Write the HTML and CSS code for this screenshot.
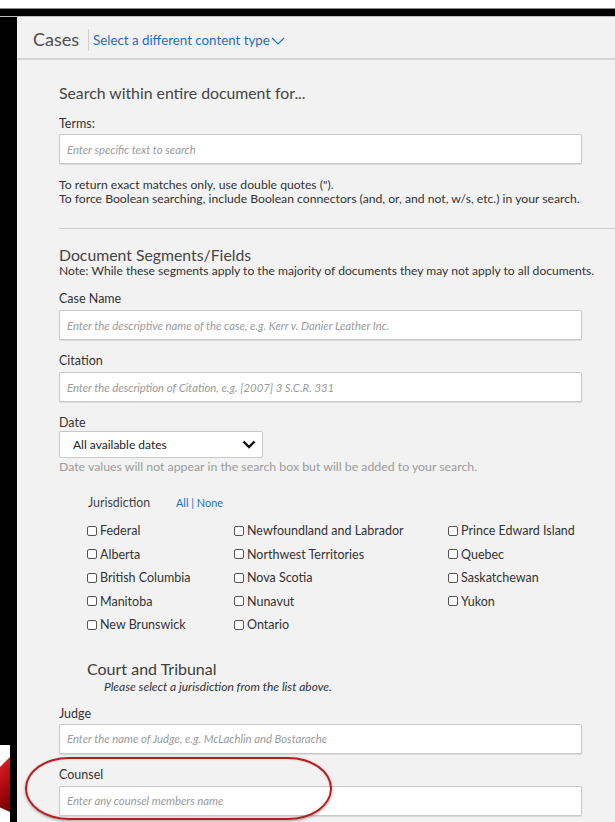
FILE: index.html
```html
<!DOCTYPE html>
<html lang="en">
<head>
<meta charset="utf-8">
<title>Cases – Search</title>
<link rel="stylesheet" href="styles.css">
</head>
<body>
<div class="screen">
  <div class="topbar"></div>
  <div class="body">
    <div class="rail">
      <div class="rail-edge">
        <div class="rail-black"></div>
        <div class="rail-gap"></div>
        <div class="rail-tab"></div>
        <div class="rail-rest"></div>
      </div>
      <div class="rail-line"></div>
    </div>

    <main class="panel">
      <header class="panel-head">
        <h1 class="head-title">Cases</h1>
        <span class="head-sep"></span>
        <a class="head-link" href="#">Select a different content type
          <svg class="head-chevron" width="14" height="8" viewBox="0 0 14 8"><path d="M1 1l6 6 6-6" fill="none" stroke="currentColor" stroke-width="1.1"/></svg>
        </a>
      </header>

      <div class="form">
        <h2 class="section-title">Search within entire document for...</h2>
        <div class="label label-terms">Terms:</div>
        <input class="text-input" type="text" placeholder="Enter specific text to search">
        <p class="hint">To return exact matches only, use double quotes (").</p>
        <p class="hint hint-next">To force Boolean searching, include Boolean connectors (and, or, and not, w/s, etc.) in your search.</p>

        <div class="divider"></div>

        <h2 class="section-title section-title-tight">Document Segments/Fields</h2>
        <p class="note">Note: While these segments apply to the majority of documents they may not apply to all documents.</p>

        <div class="label field-label">Case Name</div>
        <input class="text-input input-gap" type="text" placeholder="Enter the descriptive name of the case, e.g. Kerr v. Danier Leather Inc.">

        <div class="label field-label">Citation</div>
        <input class="text-input input-gap" type="text" placeholder="Enter the description of Citation, e.g. [2007] 3 S.C.R. 331">

        <div class="label field-label">Date</div>
        <div class="select">
          <span>All available dates</span>
          <svg width="14" height="9" viewBox="0 0 14 9"><path d="M1.5 1.5l5.5 5.5 5.5-5.5" fill="none" stroke="#111" stroke-width="2.4"/></svg>
        </div>
        <p class="date-hint">Date values will not appear in the search box but will be added to your search.</p>

        <div class="jur-head">
          <span class="jur-label">Jurisdiction</span>
          <span class="jur-links"><a href="#">All</a> | <a href="#">None</a></span>
        </div>

        <div class="jur-grid">
          <label class="check"><input type="checkbox">Federal</label>
          <label class="check"><input type="checkbox">Newfoundland and Labrador</label>
          <label class="check"><input type="checkbox">Prince Edward Island</label>
          <label class="check"><input type="checkbox">Alberta</label>
          <label class="check"><input type="checkbox">Northwest Territories</label>
          <label class="check"><input type="checkbox">Quebec</label>
          <label class="check"><input type="checkbox">British Columbia</label>
          <label class="check"><input type="checkbox">Nova Scotia</label>
          <label class="check"><input type="checkbox">Saskatchewan</label>
          <label class="check"><input type="checkbox">Manitoba</label>
          <label class="check"><input type="checkbox">Nunavut</label>
          <label class="check"><input type="checkbox">Yukon</label>
          <label class="check"><input type="checkbox">New Brunswick</label>
          <label class="check"><input type="checkbox">Ontario</label>
        </div>

        <h2 class="section-title court-title">Court and Tribunal</h2>
        <p class="court-sub">Please select a jurisdiction from the list above.</p>

        <div class="label judge-label">Judge</div>
        <input class="text-input judge-input" type="text" placeholder="Enter the name of Judge, e.g. McLachlin and Bostarache">

        <div class="label field-label">Counsel</div>
        <input class="text-input input-gap" type="text" placeholder="Enter any counsel members name">
      </div>

      <div class="callout"></div>
    </main>
  </div>
</div>
</body>
</html>
```

FILE: styles.css
```css
* { box-sizing: border-box; }

body {
  margin: 0;
  background: #fff;
  font-family: Lato, "Open Sans", "Liberation Sans", sans-serif;
  color: #333;
}

.screen {
  width: 615px;
  height: 822px;
  overflow: hidden;
  padding-top: 8px;
}

/* dark window frame */
.topbar {
  height: 9px;
  background: #000;
  border-top: 1px solid #8c8c8c;
  border-bottom: 1px solid #bdbdbd;
}

.body {
  display: flex;
  height: 805px;
}

.rail {
  display: flex;
  width: 17px;
  flex: none;
}

.rail-edge {
  width: 10px;
  display: flex;
  flex-direction: column;
}

.rail-black { height: 728px; background: #000; }
.rail-gap { height: 12px; background: #fff; }
.rail-tab {
  height: 55px;
  background: linear-gradient(135deg, #e0262b 0%, #b20d12 45%, #6e0003 100%);
  clip-path: polygon(0 18%, 100% 0, 100% 100%, 0 92%);
}
.rail-rest { flex: 1; background: #fff; }
.rail-line { width: 7px; background: #000; }

/* main panel */
.panel {
  flex: 1;
  background: #f2f2f2;
  position: relative;
}

.panel-head {
  display: flex;
  align-items: center;
  height: 43px;
  padding: 3px 0 0 16px;
  border-bottom: 2px solid #d4d4d4;
}

.head-title {
  margin: 0;
  font-size: 18px;
  font-weight: 400;
  color: #4d4d4d;
}

.head-sep {
  width: 1px;
  height: 22px;
  background: #cfcfcf;
  margin: 2px 4px 0 9px;
}

.head-link {
  display: flex;
  align-items: center;
  gap: 1px;
  color: #1b6ec2;
  font-size: 13.3px;
  text-decoration: none;
  margin-top: 2px;
}

.head-chevron { margin-top: 1px; }

.form {
  padding: 23px 33px 0 42px;
}

.section-title {
  margin: 0;
  font-size: 15.8px;
  font-weight: 400;
  line-height: 20px;
  color: #444;
}

.section-title-tight {
  margin-top: 17px;
  line-height: 18px;
}

.label {
  font-size: 12.5px;
  line-height: 16px;
  color: #333;
}

.label-terms { margin-top: 13px; }

.text-input {
  display: block;
  width: 100%;
  height: 30px;
  margin: 2px 0 0;
  padding: 0 7px;
  background: #fff;
  border: 1px solid #c8c8c8;
  border-radius: 1px;
  box-shadow: 0 1px 1px rgba(0, 0, 0, 0.1);
  font-family: Lato, "Open Sans", sans-serif;
  font-style: italic;
  font-size: 11.3px;
  color: #333;
  outline: none;
}

.text-input::placeholder {
  color: #9a9a9a;
  font-style: italic;
}

.input-gap { margin-top: 3px; }

.hint {
  margin: 14px 0 0;
  font-size: 12.2px;
  line-height: 14px;
  white-space: nowrap;
  color: #333;
}

.hint-next { margin-top: 0; }

.divider {
  margin: 22px -33px 0 0;
  border-top: 1px solid #cdcdcd;
}

.note {
  margin: 0 -33px 0 0;
  font-size: 12.1px;
  line-height: 14px;
  white-space: nowrap;
  color: #333;
}

.field-label { margin-top: 13px; }
.field-label + .text-input { margin-top: 3px; }

.select {
  display: flex;
  align-items: center;
  justify-content: space-between;
  width: 204px;
  height: 27px;
  padding: 0 6px 0 13px;
  background: #fff;
  border: 1px solid #c8c8c8;
  border-radius: 2px;
  font-size: 12px;
  color: #222;
}

.date-hint {
  margin: 2px 0 0;
  font-size: 12.3px;
  line-height: 14px;
  color: #9a9a9a;
}

.jur-head {
  display: flex;
  align-items: center;
  margin-top: 22px;
  padding-left: 29px;
  font-size: 12.4px;
  line-height: 14px;
}

.jur-label {
  width: 88px;
  color: #444;
}

.jur-links {
  font-size: 10.9px;
  color: #1b6ec2;
}

.jur-links a {
  color: #1b6ec2;
  text-decoration: none;
}

.jur-grid {
  display: grid;
  grid-template-columns: 147px 214px auto;
  grid-auto-rows: 23.5px;
  margin-top: 9px;
  padding-left: 28px;
}

.check {
  display: flex;
  align-items: center;
  font-size: 12.5px;
  color: #333;
}

.check input {
  appearance: none;
  -webkit-appearance: none;
  width: 10px;
  height: 10px;
  margin: 0 3px 0 0;
  border: 1px solid #555;
  border-radius: 2px;
  background: #fff;
}

.court-title {
  margin-top: 23px;
  padding-left: 28px;
  font-size: 16px;
  line-height: 18px;
  color: #3d3d3d;
}

.court-sub {
  margin: 2px 0 0;
  padding-left: 45px;
  font-size: 12px;
  font-style: italic;
  line-height: 14px;
  color: #333;
}

.judge-label { margin-top: 12px; }
.judge-input { margin-top: 2px; }

/* red annotation ring around the Counsel field */
.callout {
  position: absolute;
  left: 8px;
  top: 740px;
  width: 307px;
  height: 63px;
  border: 2px solid #b51f24;
  border-radius: 44px / 31px;
  box-shadow: 0 1px 3px rgba(0, 0, 0, 0.35), inset 0 0 2px rgba(120, 0, 0, 0.3);
  pointer-events: none;
}
```
